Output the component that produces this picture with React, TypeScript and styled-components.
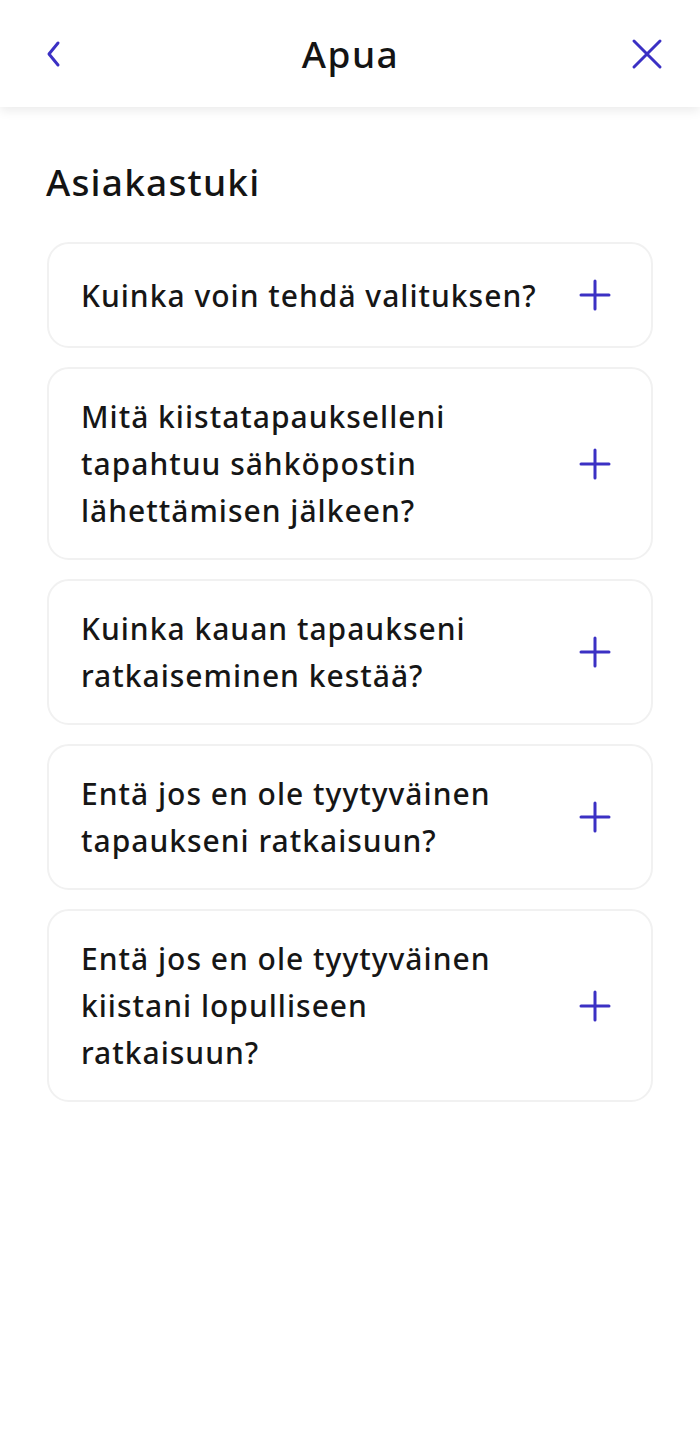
import React from "react";
import styled, { createGlobalStyle } from "styled-components";

const Global = createGlobalStyle`
  html, body {
    margin: 0;
    padding: 0;
    background: #ffffff;
  }
  body {
    font-family: "Noto Sans", "Open Sans", sans-serif;
    color: #1c1c1c;
  }
`;

const Page = styled.div`
  width: 700px;
  min-height: 1439px;
  background: #ffffff;
`;

const Header = styled.header`
  height: 107px;
  display: flex;
  align-items: center;
  justify-content: space-between;
  padding: 0 37px 0 38px;
  box-sizing: border-box;
  background: #ffffff;
  box-shadow: 0 4px 10px rgba(0, 0, 0, 0.08);
`;

const IconButton = styled.button`
  width: 32px;
  height: 32px;
  padding: 0;
  border: none;
  background: none;
  display: flex;
  align-items: center;
  justify-content: center;
  color: #3b30c4;
`;

const Title = styled.h1`
  margin: 0;
  font-size: 37px;
  font-weight: 500;
  letter-spacing: 1.5px;
  color: #141414;
`;

const Content = styled.main`
  padding: 49px 47px 0 47px;
`;

const SectionTitle = styled.h2`
  margin: 0 0 34px -1px;
  font-size: 37px;
  font-weight: 500;
  letter-spacing: 1.2px;
  line-height: 52px;
  color: #141414;
`;

const List = styled.div`
  display: flex;
  flex-direction: column;
  gap: 19px;
`;

const Card = styled.div`
  min-height: 106px;
  box-sizing: border-box;
  border: 2px solid #f1f1f1;
  border-radius: 22px;
  padding: 24px 40px 24px 32px;
  display: flex;
  align-items: center;
  gap: 34px;
`;

const Question = styled.span`
  flex: 1;
  font-size: 30px;
  font-weight: 500;
  letter-spacing: 1px;
  line-height: 47px;
  color: #161616;
`;

const Plus = () => (
  <svg width="32" height="32" viewBox="0 0 32 32" fill="none" stroke="#3b30c4" strokeWidth="3" strokeLinecap="round">
    <path d="M16 2v28M2 16h28" />
  </svg>
);

const questions = [
  "Kuinka voin tehdä valituksen?",
  "Mitä kiistatapaukselleni tapahtuu sähköpostin lähettämisen jälkeen?",
  "Kuinka kauan tapaukseni ratkaiseminen kestää?",
  "Entä jos en ole tyytyväinen tapaukseni ratkaisuun?",
  "Entä jos en ole tyytyväinen kiistani lopulliseen ratkaisuun?",
];

export default function App() {
  return (
    <Page>
      <Global />
      <Header>
        <IconButton aria-label="Takaisin">
          <svg width="18" height="28" viewBox="0 0 18 28" fill="none" stroke="currentColor" strokeWidth="3" strokeLinecap="round" strokeLinejoin="round">
            <path d="M13 3L4 14l9 11" />
          </svg>
        </IconButton>
        <Title>Apua</Title>
        <IconButton aria-label="Sulje">
          <svg width="32" height="32" viewBox="0 0 32 32" fill="none" stroke="currentColor" strokeWidth="3" strokeLinecap="round">
            <path d="M3 3l26 26M29 3L3 29" />
          </svg>
        </IconButton>
      </Header>
      <Content>
        <SectionTitle>Asiakastuki</SectionTitle>
        <List>
          {questions.map((q) => (
            <Card key={q}>
              <Question>{q}</Question>
              <Plus />
            </Card>
          ))}
        </List>
      </Content>
    </Page>
  );
}
